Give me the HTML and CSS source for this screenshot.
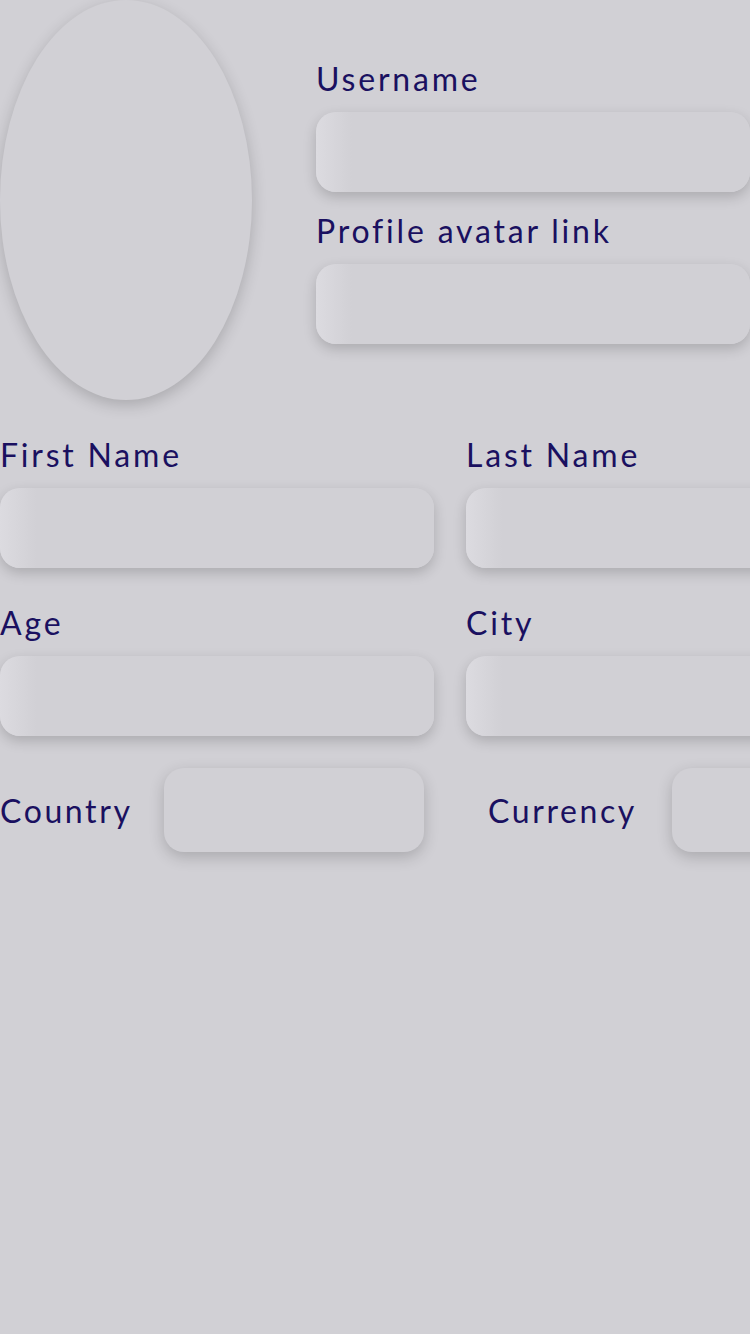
FILE: index.html
```html
<!DOCTYPE html>
<html>
<head>
<meta charset="utf-8">
<link rel="stylesheet" href="styles.css">
</head>
<body>
<div class="page">
  <section class="top">
    <div class="avatar"></div>
    <div class="top-fields">
      <label class="label first">Username</label>
      <div class="input"></div>
      <label class="label">Profile avatar link</label>
      <div class="input"></div>
    </div>
  </section>
  <section class="grid">
    <div class="field">
      <label class="label">First Name</label>
      <div class="input"></div>
    </div>
    <div class="field">
      <label class="label">Last Name</label>
      <div class="input"></div>
    </div>
    <div class="field">
      <label class="label">Age</label>
      <div class="input"></div>
    </div>
    <div class="field">
      <label class="label">City</label>
      <div class="input"></div>
    </div>
  </section>
  <section class="selects">
    <div class="select-field">
      <span class="slabel">Country</span>
      <div class="select"></div>
    </div>
    <div class="select-field right">
      <span class="slabel">Currency</span>
      <div class="select"></div>
    </div>
  </section>
</div>
</body>
</html>
```
FILE: styles.css
```css
html, body {
  margin: 0;
  padding: 0;
  background: #d1d0d5;
}
body {
  width: 750px;
  height: 1334px;
  overflow: hidden;
  font-family: "Lato", "Noto Sans", sans-serif;
  color: #1a1060;
}
.page {
  width: 750px;
  height: 1334px;
  overflow: hidden;
}
.top {
  display: flex;
  align-items: flex-start;
}
.avatar {
  flex: none;
  width: 252px;
  height: 400px;
  border-radius: 50%;
  background: #d1d0d5;
  box-shadow: 0 5px 15px rgba(0, 0, 0, 0.19);
}
.top-fields {
  flex: none;
  width: 434px;
  margin-left: 64px;
  padding-top: 56px;
}
.label {
  display: block;
  font-size: 32px;
  line-height: 46px;
  height: 46px;
  letter-spacing: 2.8px;
  margin-bottom: 10px;
}
.top-fields .input + .label {
  margin-top: 16px;
}
.input {
  height: 80px;
  border-radius: 20px;
  background: linear-gradient(90deg, #dcdbe0 0px, #d1d0d5 36px, #d1d0d5 100%);
  box-shadow: 0 5px 13px rgba(0, 0, 0, 0.18);
}
.grid {
  margin-top: 32px;
  display: grid;
  grid-template-columns: 434px 434px;
  column-gap: 32px;
  row-gap: 32px;
  width: 900px;
}
.selects {
  margin-top: 32px;
  display: flex;
  width: 900px;
}
.select-field {
  display: flex;
  align-items: center;
  width: 424px;
}
.select-field.right {
  margin-left: 64px;
}
.slabel {
  font-size: 32px;
  letter-spacing: 2.6px;
  width: 164px;
  flex: none;
}
.select-field.right .slabel {
  width: 184px;
}
.select {
  width: 260px;
  height: 84px;
  border-radius: 20px;
  background: #d1d0d5;
  box-shadow: 0 5px 15px rgba(0, 0, 0, 0.19);
}
```
